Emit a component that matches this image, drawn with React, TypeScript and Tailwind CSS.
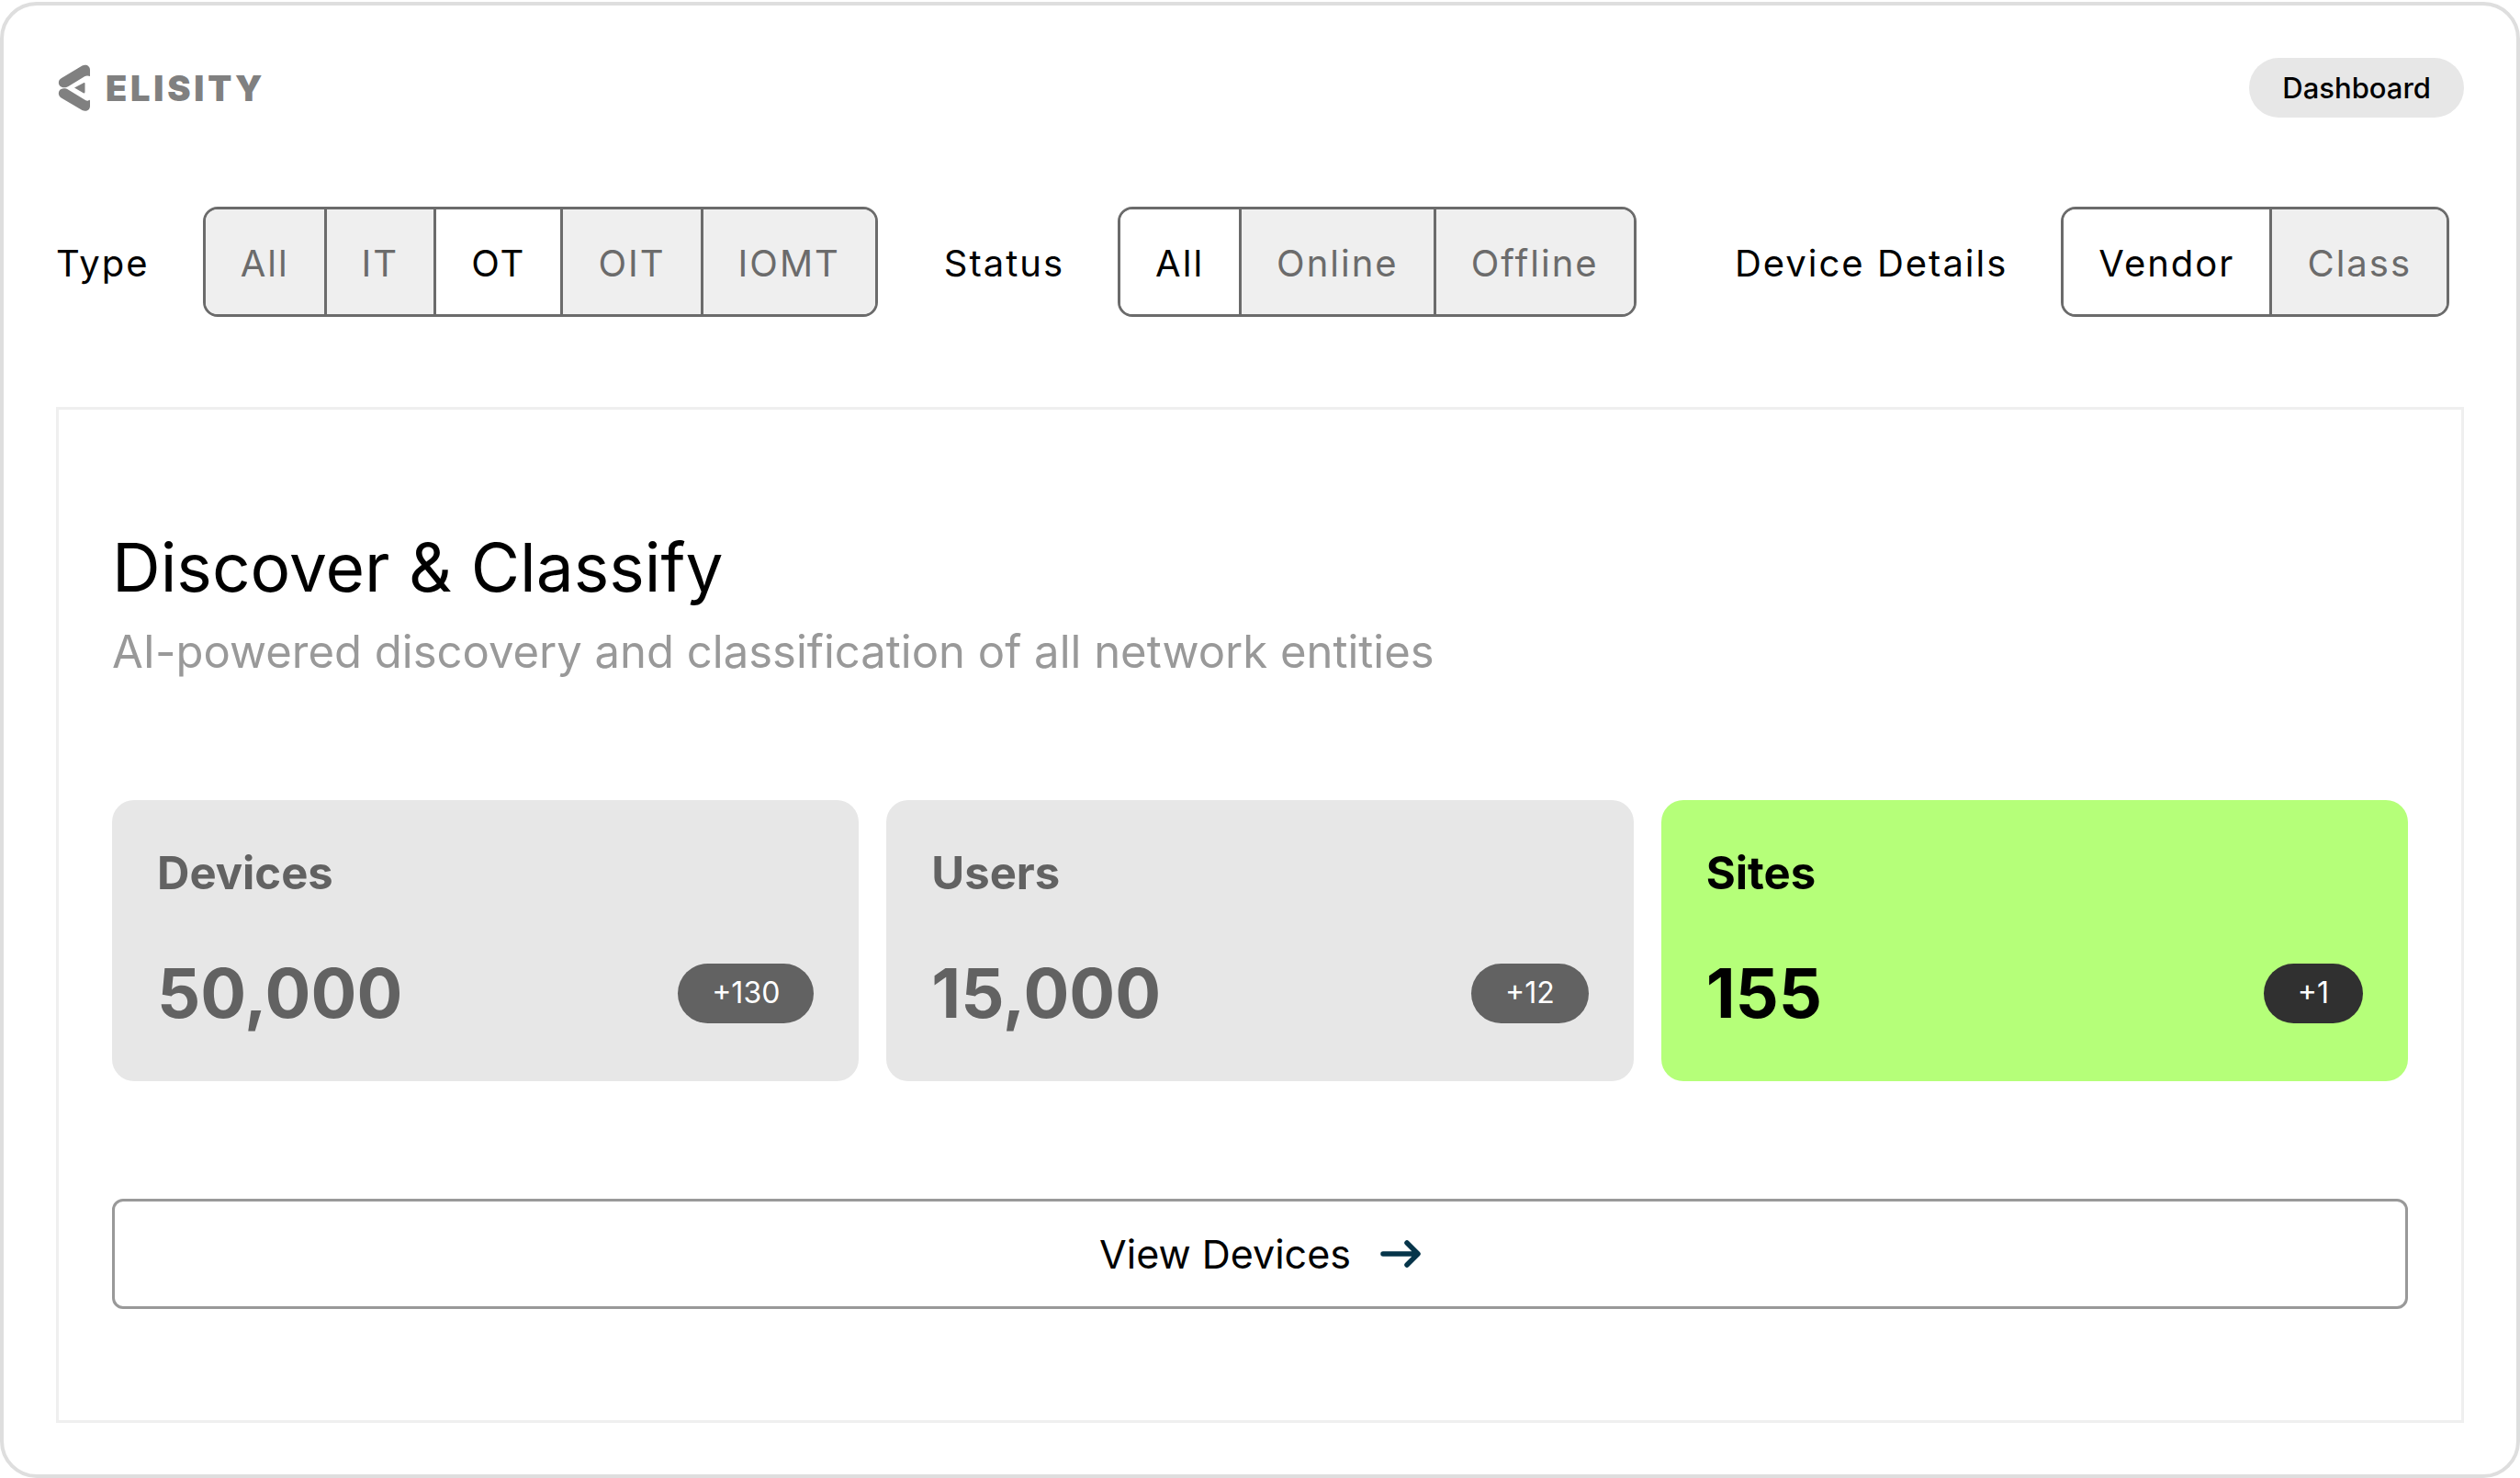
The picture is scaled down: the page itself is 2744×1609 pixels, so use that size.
import { useState } from "react"
import clsx from "clsx"

const filters = [
  { label: "Type", options: ["All", "IT", "OT", "OIT", "IOMT"], initial: "OT" },
  { label: "Status", options: ["All", "Online", "Offline"], initial: "All" },
  { label: "Device Details", options: ["Vendor", "Class"], initial: "Vendor" },
]

const stats = [
  { title: "Devices", value: "50,000", delta: "+130" },
  { title: "Users", value: "15,000", delta: "+12" },
  { title: "Sites", value: "155", delta: "+1", active: true },
]

function Logo() {
  return (
    <a href="#" className="flex items-center gap-4 text-[#808080]">
      <svg viewBox="0 0 36 52" className="h-[52px] w-9" fill="currentColor" aria-hidden="true">
        <path d="M26.500 1.500C30.500-.500 35 1.500 35 6V13L32.500 12.500C31.500 12.300 30.500 12.500 29.500 13L11.500 24C8 26.300 3 25.500 1.500 22.500C0 19.500 1.200 16.500 4 15Z" />
        <path d="M26.500 50C30.500 52 35 50 35 45.500V38.500C34 40 31.500 40 29.500 38.800L11.500 27.800C8 25.500 3 26 1.500 29C0 32 1.200 35 4 36.700Z" />
        <path d="M18 25.600L28 20.300C29 19.800 29.500 20.300 29.500 21.300V30C29.500 31.300 28.800 31.700 27.800 31.200Z" />
      </svg>
      <span className="text-[38px] leading-none font-black tracking-widest">ELISITY</span>
    </a>
  )
}

function FilterGroup({ label, options, initial }: { label: string; options: string[]; initial: string }) {
  const [selected, setSelected] = useState(initial)

  return (
    <div role="group" aria-label={label} className="flex items-center gap-[58px] last:ml-auto">
      <span className="pt-1 text-black">{label}</span>
      <div className="flex h-30 divide-x-3 divide-[#6b6b6b] overflow-hidden rounded-2xl border-3 border-[#6b6b6b]">
        {options.map((option) => (
          <button
            key={option}
            type="button"
            aria-pressed={option === selected}
            onClick={() => setSelected(option)}
            className={clsx(
              "px-[38px] pt-1 tracking-wider",
              option === selected ? "bg-white text-black" : "bg-[#efefef] text-[#6b6b6b]"
            )}
          >
            {option}
          </button>
        ))}
      </div>
    </div>
  )
}

export default function App() {
  return (
    <div className="min-h-screen bg-white pt-[2px] font-['Inter',sans-serif]">
      <main className="flex min-h-[calc(100vh-2px)] flex-col rounded-[40px] border-4 border-[#dedede] px-[57px] pt-[57px] pb-14">
        <header className="flex items-center justify-between pl-[2px]">
          <Logo />
          <a href="#" className="rounded-full bg-[#e7e7e7] px-9 pt-[13px] pb-3 text-[31px] leading-10 font-medium text-black">
            Dashboard
          </a>
        </header>

        <div className="mt-[97px] flex items-center gap-[72px] pr-4 text-[40px] tracking-wider">
          {filters.map((filter) => (
            <FilterGroup key={filter.label} {...filter} />
          ))}
        </div>

        <section className="mt-[98px] flex-1 border-3 border-[#efefef] px-[58px] pt-32">
          <h1 className="text-[73px] leading-[88px] text-black">Discover &amp; Classify</h1>
          <p className="mt-3 text-[49px] leading-[72px] text-[#999999]">
            AI-powered discovery and classification of all network entities
          </p>

          <div className="mt-[125px] grid grid-cols-3 gap-[30px]">
            {stats.map((stat) => (
              <div
                key={stat.title}
                className={clsx(
                  "rounded-3xl px-[49px] pt-12 pb-[52px] font-bold",
                  stat.active ? "bg-[#b5ff79] text-black" : "bg-[#e7e7e7] text-[#626262]"
                )}
              >
                <h2 className="text-[49px] leading-[64px]">{stat.title}</h2>
                <div className="mt-[54px] flex items-center justify-between">
                  <span className="text-[74px] leading-[88px]">{stat.value}</span>
                  <span
                    className={clsx(
                      "rounded-full px-[37px] pt-3 pb-[13px] text-[32px] leading-10 font-normal text-white",
                      stat.active ? "bg-[#303030]" : "bg-[#626262]"
                    )}
                  >
                    {stat.delta}
                  </span>
                </div>
              </div>
            ))}
          </div>

          <button
            type="button"
            className="mt-32 flex h-30 w-full items-center justify-center gap-8 rounded-xl border-3 border-[#999999] text-[43px] text-black"
          >
            View Devices
            <svg
              viewBox="0 0 44 32"
              className="h-8 w-11"
              fill="none"
              stroke="#06354a"
              strokeWidth="5.5"
              strokeLinecap="round"
              strokeLinejoin="round"
              aria-hidden="true"
            >
              <path d="M3 16H40M29 4L41 16L29 28" />
            </svg>
          </button>
        </section>
      </main>
    </div>
  )
}
